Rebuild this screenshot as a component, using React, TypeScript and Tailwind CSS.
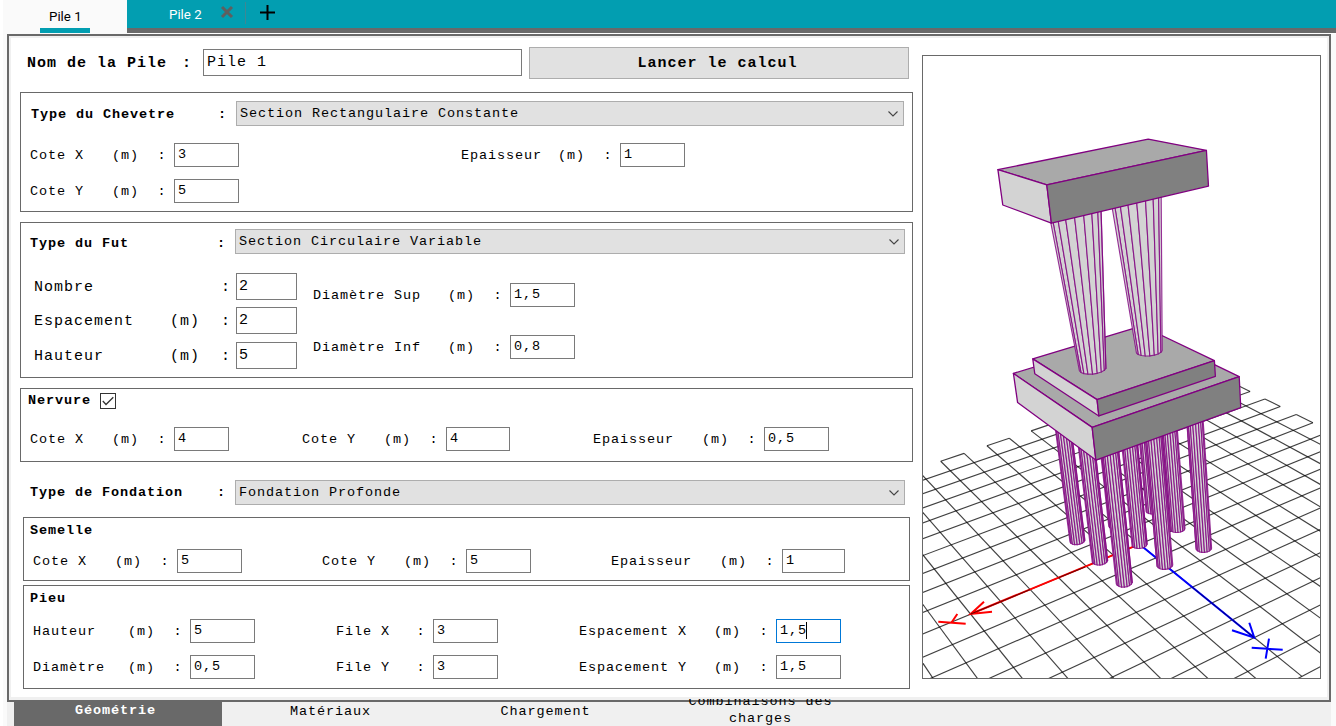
import React from "react";
import type { ReactNode } from "react";

type Point = [number, number];

/* ---------- 3D view ---------- */

// Perspective camera: X points to the lower left, Y to the lower right, Z upwards (metres).
const CAM = [
  -0.0870744599, 0.0525807396, -0.00936299693, 0.0650670957,
  0.0278809639, 0.0296896288, -0.0942070254, 0.580753799,
  -0.0135238607, -0.02485929, -0.0117772005,
];

const depth = (x: number, y: number, z: number) => CAM[8] * x + CAM[9] * y + CAM[10] * z + 1;

function project(x: number, y: number, z: number): Point {
  const w = depth(x, y, z);
  return [
    1120 + (300 * (CAM[0] * x + CAM[1] * y + CAM[2] * z + CAM[3])) / w,
    370 + (300 * (CAM[4] * x + CAM[5] * y + CAM[6] * z + CAM[7])) / w,
  ];
}

const toPoints = (pts: Point[]) => pts.map((p) => `${p[0].toFixed(2)},${p[1].toFixed(2)}`).join(" ");

const EDGE = "#800080";

function Line3D({ from, to }: { from: [number, number]; to: [number, number] }) {
  const a = project(from[0], from[1], 0);
  const b = project(to[0], to[1], 0);
  return <line x1={a[0]} y1={a[1]} x2={b[0]} y2={b[1]} />;
}

function Ground() {
  const range = Array.from({ length: 19 }, (_, i) => i - 10);
  const tiles = [-10, -8, -6, -4, -2, 0, 2, 4, 6];
  return (
    <g stroke="#000" strokeOpacity={0.75} strokeWidth={1.15}>
      {range.map((k) => (
        <g key={k}>
          {k > -10 && <Line3D from={[-10, k]} to={[9, k]} />}
          {k > -10 && <Line3D from={[k, -10]} to={[k, 8]} />}
        </g>
      ))}
      {tiles.map((k) => (
        <g key={k}>
          <Line3D from={[k, -10]} to={[k + 1, -10]} />
          <Line3D from={[-10, k]} to={[-10, k + 1]} />
        </g>
      ))}
    </g>
  );
}

function Box({ lx, ly, z0, z1 }: { lx: number; ly: number; z0: number; z1: number }) {
  const x = lx / 2;
  const y = ly / 2;
  return (
    <g stroke={EDGE} strokeWidth={1.3} strokeLinejoin="round">
      <polygon fill="#a9a9a9" points={toPoints([project(x, -y, z1), project(x, y, z1), project(-x, y, z1), project(-x, -y, z1)])} />
      <polygon fill="#d3d3d3" points={toPoints([project(x, -y, z1), project(x, y, z1), project(x, y, z0), project(x, -y, z0)])} />
      <polygon fill="#808080" points={toPoints([project(x, y, z1), project(-x, y, z1), project(-x, y, z0), project(x, y, z0)])} />
    </g>
  );
}

function Shaft({ cx, cy, r0, r1, z0, z1 }: { cx: number; cy: number; r0: number; r1: number; z0: number; z1: number }) {
  const at = (i: number, r: number, z: number) => {
    const a = (i * Math.PI) / 9;
    return project(cx + r * Math.cos(a), cy + r * Math.sin(a), z);
  };
  const facets: Point[][] = [];
  for (let i = 0; i < 18; i++) {
    const quad = [at(i, r0, z0), at(i + 1, r0, z0), at(i + 1, r1, z1), at(i, r1, z1)];
    const area = quad.reduce((s, p, k) => {
      const q = quad[(k + 1) % 4];
      return s + p[0] * q[1] - q[0] * p[1];
    }, 0);
    if (area < 0) facets.push(quad);
  }
  return (
    <g fill="#d3d3d3" stroke={EDGE} strokeWidth={1.15} strokeOpacity={0.8} strokeLinejoin="round">
      {facets.map((quad, i) => (
        <polygon key={i} points={toPoints(quad)} />
      ))}
    </g>
  );
}

const PILES = [-1.5, 0, 1.5]
  .flatMap((x) => [-1.5, 0, 1.5].map((y) => [x, y]))
  .sort((a, b) => depth(b[0], b[1], 0) - depth(a[0], a[1], 0));

function Viewer() {
  return (
    <div className="h-[624px] w-[399px] border border-[#696969] bg-white">
      <svg viewBox="923 56 397 622" className="block h-[622px] w-[397px]">
        <Ground />
        <g stroke="#f00" fill="none" strokeWidth={2}>
          <path d="M1139.5 544.2L970.7 614M984 601.7L970.7 614L992 611.7" />
          <path d="M938.3 621.7L965.7 623.7M957.3 614L951.7 622.3" />
          <path d="M1085 567L1058.5 577.7M1030 589.6L970.7 614" stroke="#000" strokeOpacity={0.6} strokeWidth={1} />
        </g>
        <g stroke="#00f" fill="none" strokeWidth={2}>
          <path d="M1139.5 544.2L1254.3 637.7M1249.3 622.7L1254.3 637.7L1232 630.3" />
          <path d="M1251.7 647.7L1282.7 649.7M1269 638.7L1265.7 658.7" />
          <path d="M1192 587.1L1254.3 637.7" stroke="#000" strokeOpacity={0.5} strokeWidth={1} />
        </g>
        {PILES.map(([x, y]) => (
          <Shaft key={`${x}/${y}`} cx={x} cy={y} r0={0.25} r1={0.25} z0={0} z1={5} />
        ))}
        <Box lx={5} ly={5} z0={5} z1={6} />
        <Box lx={4} ly={4} z0={6} z1={6.5} />
        <Shaft cx={-1} cy={0} r0={0.4} r1={0.75} z0={6.5} z1={11.5} />
        <Shaft cx={1} cy={0} r0={0.4} r1={0.75} z0={6.5} z1={11.5} />
        <Box lx={5} ly={3} z0={11.5} z1={12.5} />
      </svg>
    </div>
  );
}

/* ---------- form parts ---------- */

function TextBox({ value, width, focused }: { value: string; width: string; focused?: boolean }) {
  return (
    <div className={`flex h-6 border bg-white pl-[3px] leading-[22px] ${width} ${focused ? "border-[#0078d7]" : "border-[#7a7a7a]"}`}>
      {value}
      {focused && <span className="-ml-px mt-[2px] h-[17px] w-px bg-black" />}
    </div>
  );
}

function Field({
  label, labelWidth, value, unit = "(m)", width = "w-[65px]", className = "", focused,
}: {
  label: string; labelWidth: string; value: string; unit?: string; width?: string; className?: string; focused?: boolean;
}) {
  return (
    <div className={`flex h-6 shrink-0 leading-[26px] whitespace-pre ${className}`}>
      <span className={`shrink-0 ${labelWidth}`}>{label}</span>
      {unit && <span className="w-[46px] shrink-0 pl-px">{unit}</span>}
      <span className="w-[17px] shrink-0 pl-[0.5px]">:</span>
      <TextBox value={value} width={width} focused={focused} />
    </div>
  );
}

function LargeField({ label, unit, value, className }: { label: string; unit?: string; value: string; className?: string }) {
  return (
    <div className={`flex h-[27px] text-[15px] leading-[29px] tracking-[1px] ${className ?? ""}`}>
      <span className="w-[136px]">{label}</span>
      <span className="w-[51px]">{unit}</span>
      <span className="w-[15px]">:</span>
      <div className="h-[27px] w-[61px] border border-[#7a7a7a] pl-[2px] leading-[26px]">{value}</div>
    </div>
  );
}

function Select({ value, className }: { value: string; className: string }) {
  return (
    <div className={`flex h-[25px] items-center justify-between border border-[#adadad] bg-[#e1e1e1] pr-[5px] pl-[3px] ${className}`}>
      <span className="leading-[23px]">{value}</span>
      <svg viewBox="0 0 10 6" className="h-[6px] w-[10px]" fill="none" stroke="#444" strokeWidth="1.1">
        <path d="M0.5 0.5L5 5L9.5 0.5" />
      </svg>
    </div>
  );
}

function Panel({ className, children }: { className: string; children: ReactNode }) {
  return <section className={`border border-[#696969] ${className}`}>{children}</section>;
}

function TypeLabel({ children, className }: { children: string; className: string }) {
  return (
    <>
      <span className={`font-bold ${className}`}>{children}</span>
      <span className="w-[18px] font-bold">:</span>
    </>
  );
}

/* ---------- page ---------- */

function TopTabs() {
  return (
    <header className="flex h-[34px] font-['Roboto',sans-serif] text-[13.3px] tracking-normal">
      <div className="ml-[3px] flex w-[124px] flex-col bg-[#fafafa] pl-[37px]">
        <span className="h-7 pt-[9px] pl-[9px] leading-4">Pile 1</span>
        <span className="h-[5px] w-[50px] bg-[#029eb1]" />
      </div>
      <div className="flex h-[33px] flex-1 border-b-[5px] border-[#696969] bg-[#029eb1]">
        <span className="ml-[42px] w-[52px] pt-[7px] leading-4 text-white">Pile 2</span>
        <svg viewBox="0 0 12 12" className="mt-[6px] h-3 w-3 overflow-visible" stroke="#5f5f5f" strokeWidth="3">
          <path d="M1 1L11 11M11 1L1 11" />
        </svg>
        <span className="mt-[2px] ml-3 h-[22px] w-px bg-[#3f8793]" />
        <svg viewBox="0 0 15 15" className="mt-[5px] ml-[14px] h-[15px] w-[15px]" stroke="#000" strokeWidth="2">
          <path d="M7.5 0V15M0 7.5H15" />
        </svg>
      </div>
    </header>
  );
}

function BottomTabs() {
  return (
    <nav className="relative z-10 -mt-[3px] flex h-[27px] overflow-hidden text-center">
      <div className="mt-[3px] ml-[14px] w-[208px] bg-[#696969] pr-[5px] font-bold text-white">
        <span className="block leading-[17px]">Géométrie</span>
      </div>
      <div className="w-[217px] pt-[4px] leading-[18px]">Matériaux</div>
      <div className="w-[213px] pt-[4px] leading-[18px]">Chargement</div>
      <div className="w-[217px] px-8">
        <span className="-mt-[6px] block leading-[17px]">Combinaisons des charges</span>
      </div>
    </nav>
  );
}

export default function App() {
  return (
    <div className="h-[726px] w-[1336px] overflow-hidden bg-white font-['Liberation_Mono',monospace] text-[13.5px] tracking-[0.9px] text-black">
      <TopTabs />
      <div className="ml-[3px] h-[692px] bg-[#fafafa] pl-1">
        <div className="h-[692px] w-[1324px] bg-[#f0f0f0]">
          <main className="h-[668px] border-2 border-[#696969] bg-[#f0f0f0]">
            <div className="flex h-[664px] border-2 border-b-[3px] border-[#f0f0f0] bg-white pl-[9px]">
              <div className="flex w-[902px] shrink-0 flex-col pt-[9px]">
                <div className="flex h-8 text-[15px] tracking-[1px]">
                  <span className="w-[162px] pt-[5px] pl-[7px] leading-[24px] font-bold">Nom de la Pile</span>
                  <span className="w-[21px] pt-[5px] leading-[24px] font-bold">:</span>
                  <div className="mt-[2px] h-[27px] w-[319px] border border-[#7a7a7a] pl-[3px] leading-[25px]">Pile 1</div>
                  <button className="ml-[7px] h-8 w-[380px] border border-[#adadad] bg-[#e1e1e1] pt-[2px] pr-[3px] leading-[26px] font-bold tracking-[1px]">
                    Lancer le calcul
                  </button>
                </div>

                <Panel className="mt-[13px] h-[120px] w-[893px] pt-2">
                  <div className="flex pl-[10px] leading-[27px]">
                    <TypeLabel className="w-[187px]">Type du Chevetre</TypeLabel>
                    <Select value="Section Rectangulaire Constante" className="w-[668px]" />
                  </div>
                  <div className="-mt-[2px] flex pt-[17px] pl-[9px]">
                    <Field label="Cote X" labelWidth="w-[81px]" value="3" />
                    <Field label="Epaisseur" labelWidth="w-[96px]" value="1" className="ml-[222px]" />
                  </div>
                  <div className="mt-3 flex pl-[9px]">
                    <Field label="Cote Y" labelWidth="w-[81px]" value="5" />
                  </div>
                </Panel>

                <Panel className="mt-[10px] h-[156px] w-[893px] pt-[6px]">
                  <div className="flex pl-[9px] leading-[30px]">
                    <TypeLabel className="w-[187px]">Type du Fut</TypeLabel>
                    <Select value="Section Circulaire Variable" className="w-[670px]" />
                  </div>
                  <div className="flex pt-[14px]">
                    <div className="flex w-[277px] flex-col pl-[13px]">
                      <LargeField label="Nombre" value="2" />
                      <LargeField label="Espacement" unit="(m)" value="2" className="mt-[7px]" />
                      <LargeField label="Hauteur" unit="(m)" value="5" className="mt-[8px]" />
                    </div>
                    <div className="flex flex-col gap-7 pt-[10px] pl-[15px]">
                      <Field label="Diamètre Sup" labelWidth="w-[134px]" value="1,5" />
                      <Field label="Diamètre Inf" labelWidth="w-[134px]" value="0,8" />
                    </div>
                  </div>
                </Panel>

                <Panel className="mt-[10px] h-[74px] w-[893px] pt-1">
                  <div className="flex h-4 items-center pl-[7px]">
                    <span className="w-[72px] leading-4 font-bold">Nervure</span>
                    <span className="flex h-4 w-4 items-center justify-center border border-[#333]">
                      <svg viewBox="0 0 12 10" className="h-[10px] w-3" fill="none" stroke="#333" strokeWidth="1.3">
                        <path d="M0.8 5L4 8.5L11.3 1.2" />
                      </svg>
                    </span>
                  </div>
                  <div className="mt-[18px] flex pl-[9px]">
                    <Field label="Cote X" labelWidth="w-[81px]" value="4" width="w-[55px]" />
                    <Field label="Cote Y" labelWidth="w-[81px]" value="4" width="w-[64px]" className="ml-[73px]" />
                    <Field label="Epaisseur" labelWidth="w-[108px]" value="0,5" className="ml-[83px]" />
                  </div>
                </Panel>

                <div className="mt-[18px] flex h-[25px] pl-[10px] leading-[26px]">
                  <TypeLabel className="w-[187px]">Type de Fondation</TypeLabel>
                  <Select value="Fondation Profonde" className="w-[670px]" />
                </div>

                <Panel className="mt-3 ml-[3px] h-[64px] w-[887px] pt-1">
                  <div className="h-4 pl-[6px] leading-[18px] font-bold">Semelle</div>
                  <div className="mt-[11px] flex pl-[9px]">
                    <Field label="Cote X" labelWidth="w-[81px]" value="5" />
                    <Field label="Cote Y" labelWidth="w-[81px]" value="5" className="ml-[80px]" />
                    <Field label="Epaisseur" labelWidth="w-[108px]" value="1" width="w-[63px]" className="ml-[80px]" />
                  </div>
                </Panel>

                <Panel className="mt-1 ml-[3px] h-[104px] w-[887px] pt-1">
                  <div className="h-4 pl-[6px] leading-[18px] font-bold">Pieu</div>
                  <div className="mt-[13px] flex pl-[9px]">
                    <Field label="Hauteur" labelWidth="w-[94px]" value="5" />
                    <Field label="File X" labelWidth="w-[80px]" unit="" value="3" className="ml-[81px]" />
                    <Field label="Espacement X" labelWidth="w-[134px]" value="1,5" className="ml-[81px]" focused />
                  </div>
                  <div className="mt-3 flex pl-[9px]">
                    <Field label="Diamètre" labelWidth="w-[94px]" value="0,5" />
                    <Field label="File Y" labelWidth="w-[80px]" unit="" value="3" className="ml-[81px]" />
                    <Field label="Espacement Y" labelWidth="w-[134px]" value="1,5" className="ml-[81px]" />
                  </div>
                </Panel>
              </div>
              <div className="pt-[17px]">
                <Viewer />
              </div>
            </div>
          </main>
          <div className="-ml-[7px]">
            <BottomTabs />
          </div>
        </div>
      </div>
    </div>
  );
}
